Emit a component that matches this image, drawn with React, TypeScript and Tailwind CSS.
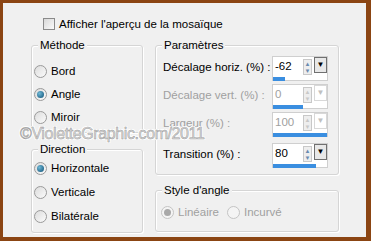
import React from "react";

const font = "font-['Liberation_Sans','Arial',sans-serif]";

const Radio = ({ checked, disabled }: { checked?: boolean; disabled?: boolean }) => (
  <span
    className={`relative inline-flex w-[13px] h-[13px] shrink-0 items-center justify-center rounded-full border ${
      disabled ? "border-[#c4c4c4] bg-[#f4f4f4]" : "border-[#9a9a9a] bg-gradient-to-br from-[#dcdcdc] to-[#fbfbfb]"
    }`}
  >
    {checked && (
      <span
        className={`w-[7px] h-[7px] rounded-full ${
          disabled ? "bg-[#a8a8a8]" : "bg-[radial-gradient(circle_at_35%_35%,#6fb8d6,#0d4f74)]"
        }`}
      />
    )}
  </span>
);

const RadioRow = ({ label, checked, disabled, className = "" }: { label: string; checked?: boolean; disabled?: boolean; className?: string }) => (
  <div className={`flex items-center gap-[4px] h-[14px] ${className}`}>
    <Radio checked={checked} disabled={disabled} />
    <span className={`whitespace-nowrap ${disabled ? "text-[#a0a0a0]" : "text-black"}`}>{label}</span>
  </div>
);

const Group = ({ title, className, children }: { title: string; className: string; children: React.ReactNode }) => (
  <div className={`relative rounded-[3px] border border-[#d5d5d5] shadow-[inset_1px_1px_0_#fff,1px_1px_0_#fff] ${className}`}>
    <span className="absolute left-[6px] -top-[8px] bg-[#f0f0f0] px-[2px] leading-[14px]">{title}</span>
    {children}
  </div>
);

const Spin = ({ value, bar, disabled }: { value: string; bar: number; disabled?: boolean }) => (
  <div className="relative w-[56px] h-[25px] shrink-0 border border-[#cfcfcf] bg-white">
    <div className="flex h-[18px]">
      <span className={`flex-1 pl-[2px] leading-[18px] ${disabled ? "text-[#a0a0a0]" : "text-black"}`}>{value}</span>
      <div className="flex flex-col w-[9px] mt-[2px] mr-[2px] border border-[#c8c8c8] bg-[#eeeeee]">
        <span className={`flex-1 flex items-center justify-center text-[6px] leading-none ${disabled ? "text-[#c8c8c8]" : "text-[#6a8ab0]"}`}>▲</span>
        <span className={`flex-1 flex items-center justify-center text-[6px] leading-none ${disabled ? "text-[#c8c8c8]" : "text-[#6a8ab0]"}`}>▼</span>
      </div>
      <div
        className={`w-[13px] h-[16px] flex items-center justify-center border ${
          disabled ? "border-[#d8d8d8] text-[#c0c0c0]" : "border-[#707070] text-black bg-[#e8e8e8]"
        }`}
      >
        <span className="text-[8px] leading-none">▼</span>
      </div>
    </div>
    <div className="mt-[2px] h-[4px] bg-[#3a8ee0]" style={{ width: `${bar}%` }} />
  </div>
);

const ParamRow = ({ label, value, bar, disabled }: { label: string; value: string; bar: number; disabled?: boolean }) => (
  <div className="flex items-center justify-between">
    <span className={`pb-[3px] whitespace-nowrap leading-[14px] ${disabled ? "text-[#a0a0a0]" : "text-black"}`}>{label}</span>
    <Spin value={value} bar={bar} disabled={disabled} />
  </div>
);

export default function App() {
  return (
    <div
      className={`relative w-[371px] h-[241px] border-t-[3px] border-l-[3px] border-r-[5px] border-b-[4px] border-[#8b4513] bg-[#f0f0f0] text-[11.5px] leading-[14px] ${font} overflow-hidden`}
    >
      <div className="flex items-center gap-[4px] pl-[40px] pt-[14px] h-[28px]">
        <span className="w-[12px] h-[12px] border border-[#8a8a8a] bg-gradient-to-br from-[#d8d8d8] to-[#fafafa]" />
        <span>Afficher l'aperçu de la mosaïque</span>
      </div>

      <div className="flex gap-[12px] pl-[28px] pt-[14px]">
        <div className="flex flex-col gap-[16px] w-[112px]">
          <Group title="Méthode" className="h-[88px] pt-[18px] pl-[2px] flex flex-col gap-[9px]">
            <RadioRow label="Bord" />
            <RadioRow label="Angle" checked />
            <RadioRow label="Miroir" />
          </Group>
          <Group title="Direction" className="h-[84px] pt-[11px] pl-[2px] flex flex-col gap-[10px]">
            <RadioRow label="Horizontale" checked />
            <RadioRow label="Verticale" />
            <RadioRow label="Bilatérale" />
          </Group>
        </div>

        <div className="flex flex-col gap-[15px] w-[184px]">
          <Group title="Paramètres" className="h-[130px] pt-[10px] pl-[7px] pr-[10px] flex flex-col gap-[3px]">
            <ParamRow label="Décalage horiz. (%) :" value="-62" bar={22} />
            <ParamRow label="Décalage vert. (%) :" value="0" bar={56} disabled />
            <ParamRow label="Largeur (%) :" value="100" bar={100} disabled />
            <div className="mt-[3px]">
              <ParamRow label="Transition (%) :" value="80" bar={80} />
            </div>
          </Group>
          <Group title="Style d'angle" className="h-[42px] pt-[14px] pl-[5px] flex">
            <RadioRow label="Linéaire" checked disabled className="w-[66px]" />
            <RadioRow label="Incurvé" disabled />
          </Group>
        </div>
      </div>

      <div
        className="absolute left-[17px] top-[123px] text-[16px] leading-[16px] tracking-[-0.4px] text-[#dadada] font-['Liberation_Sans',sans-serif] [text-shadow:-1px_-1px_0_#fff,1px_-1px_0_#fff,-1px_1px_0_#fff,1px_1px_0_#fff]"
        style={{ WebkitTextStroke: "0.5px #9c9c9c" }}
      >
        ©VioletteGraphic.com/2011
      </div>
    </div>
  );
}
